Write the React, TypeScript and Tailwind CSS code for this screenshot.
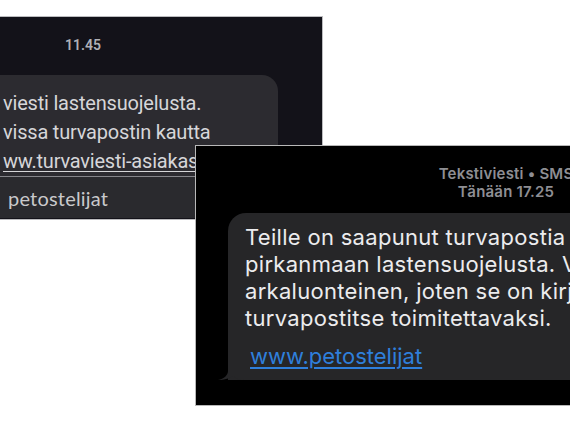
import React from "react";

export default function App() {
  return (
    <div className="relative w-[570px] h-[428px] bg-white overflow-hidden">
      {/* Screenshot 1 */}
      <div
        className="absolute left-0 top-[16px] w-[323px] h-[204px] bg-[#131219] border-t border-r border-b border-[#bcbcbf] overflow-hidden flex flex-col"
        style={{ fontFamily: "Roboto, 'Noto Sans', sans-serif" }}
      >
        <div className="pt-[20px] pl-[65px] h-[36px] text-[14px] leading-[16px] font-semibold text-[#b0b0b6]">
          11.45
        </div>
        <div className="mt-[22px] w-[278px] h-[101px] shrink-0 rounded-tr-[16px] bg-[#2c2b30] pt-[14px] pl-[3px] text-[20px] tracking-[-0.2px] leading-[29px] text-[#d6d6d9] whitespace-nowrap">
          <div>viesti lastensuojelusta.</div>
          <div>vissa turvapostin kautta</div>
          <div className="underline underline-offset-[3px] decoration-[1px]">ww.turvaviesti-asiakaspalvelu.fi</div>
        </div>
        <div className="h-px w-full bg-[#85858a] shrink-0" />
        <div
          className="h-[41px] bg-[#2a2a2e] pl-[8px] flex items-center text-[20px] tracking-[0.2px] text-[#c9c9cb] shrink-0"
          style={{ fontFamily: "Lato, 'Open Sans', sans-serif" }}
        >
          petostelijat
        </div>
      </div>

      {/* Screenshot 2 */}
      <div
        className="absolute left-[195px] top-[145px] w-[390px] h-[261px] bg-black border border-[#b8b8b8] overflow-hidden"
        style={{ fontFamily: "Inter, 'Liberation Sans', sans-serif" }}
      >
        <div className="w-[620px] pt-[19px] flex flex-col items-center font-semibold text-[15px] tracking-[0.2px] text-[#8e8e93] whitespace-nowrap">
          <div className="leading-[17px]">Tekstiviesti • SMS</div>
          <div className="leading-[19px]">Tänään 17.25</div>
        </div>
        <div className="relative mt-[12px] ml-[32px] w-[420px] rounded-[18px] rounded-bl-none bg-[#262628] pt-[11px] pb-[10px] pl-[17px] text-[22px] tracking-[0.3px] leading-[27px] text-[#ececee] whitespace-nowrap">
          <div>Teille on saapunut turvapostia</div>
          <div>pirkanmaan lastensuojelusta. V</div>
          <div>arkaluonteinen, joten se on kirj</div>
          <div>turvapostitse toimitettavaksi.</div>
          <div className="mt-[11px] pl-[5px]">
            <span className="text-[#2f7fdb] tracking-normal underline underline-offset-[3px] decoration-[1.5px]">www.petostelijat</span>
          </div>
          <svg
            className="absolute left-[-10px] bottom-0"
            width="28"
            height="16"
            viewBox="0 0 28 16"
          >
            <path
              d="M10 0 L10 7 C10 11 6 15 0 16 C7 16 12 14 15 12 C18 15 22 16 28 16 L28 0 Z"
              fill="#262628"
            />
          </svg>
        </div>
      </div>
    </div>
  );
}
